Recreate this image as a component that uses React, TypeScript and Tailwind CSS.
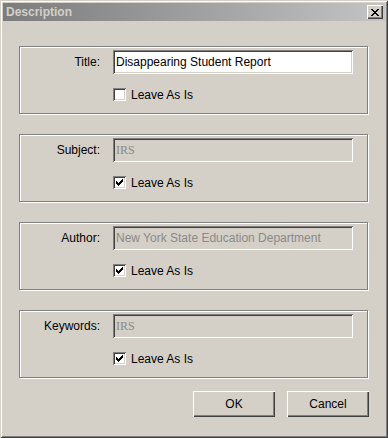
import React from 'react';

const font = { fontFamily: '"Liberation Sans", Arial, sans-serif' };

const CheckMark = () => (
  <svg width="7" height="7" viewBox="0 0 7 7" shapeRendering="crispEdges">
    <rect x="6" y="0" width="1" height="1" fill="#000" />
    <rect x="5" y="1" width="2" height="1" fill="#000" />
    <rect x="0" y="2" width="1" height="1" fill="#000" />
    <rect x="4" y="2" width="3" height="1" fill="#000" />
    <rect x="0" y="3" width="2" height="1" fill="#000" />
    <rect x="3" y="3" width="3" height="1" fill="#000" />
    <rect x="0" y="4" width="5" height="1" fill="#000" />
    <rect x="1" y="5" width="3" height="1" fill="#000" />
    <rect x="2" y="6" width="1" height="1" fill="#000" />
  </svg>
);

const CloseGlyph = () => (
  <svg width="8" height="7" viewBox="0 0 8 7" shapeRendering="crispEdges">
    <rect x="0" y="0" width="2" height="1" fill="#000" />
    <rect x="6" y="0" width="2" height="1" fill="#000" />
    <rect x="1" y="1" width="2" height="1" fill="#000" />
    <rect x="5" y="1" width="2" height="1" fill="#000" />
    <rect x="2" y="2" width="4" height="1" fill="#000" />
    <rect x="3" y="3" width="2" height="1" fill="#000" />
    <rect x="2" y="4" width="4" height="1" fill="#000" />
    <rect x="1" y="5" width="2" height="1" fill="#000" />
    <rect x="5" y="5" width="2" height="1" fill="#000" />
    <rect x="0" y="6" width="2" height="1" fill="#000" />
    <rect x="6" y="6" width="2" height="1" fill="#000" />
  </svg>
);

interface FieldProps {
  label: string;
  value: string;
  editable?: boolean;
  checked?: boolean;
  serif?: boolean;
}

const FieldGroup = ({ label, value, editable, checked, serif }: FieldProps) => (
  <div className="w-[349px] h-[68px] border border-[#808080] shadow-[inset_1px_1px_0_#fff,1px_1px_0_#fff] pt-[3px] flex flex-col">
    <div className="flex items-center h-[24px]">
      <div className="w-[81px] pr-[1px] text-right text-black">{label}</div>
      <div
        className={`ml-[12px] w-[240px] h-[24px] flex items-center pl-[3px] shadow-[inset_1px_1px_0_#808080,inset_-1px_-1px_0_#fff,inset_2px_2px_0_#404040,inset_-2px_-2px_0_#d4d0c8] ${
          editable ? 'bg-white text-black' : 'bg-[#d4d0c8] text-[#8a8a8a]'
        }`}
        style={serif ? { fontFamily: '"Liberation Serif", serif' } : undefined}
      >
        {value}
      </div>
    </div>
    <div className="flex items-center mt-[14px] ml-[93px] h-[13px]">
      <div className="w-[13px] h-[13px] bg-white flex items-center justify-center shadow-[inset_1px_1px_0_#808080,inset_-1px_-1px_0_#fff,inset_2px_2px_0_#404040,inset_-2px_-2px_0_#d4d0c8]">
        {checked && <CheckMark />}
      </div>
      <span className="ml-[5px] text-black">Leave As Is</span>
    </div>
  </div>
);

const Button = ({ children }: { children: React.ReactNode }) => (
  <button className="w-[82px] h-[26px] bg-[#d4d0c8] text-black flex items-center justify-center shadow-[inset_1px_1px_0_#fff,inset_-1px_-1px_0_#404040,inset_-2px_-2px_0_#808080]">
    {children}
  </button>
);

export default function App() {
  return (
    <div
      className="w-[388px] h-[438px] bg-[#d4d0c8] flex flex-col text-[12px] shadow-[inset_1px_1px_0_#d4d0c8,inset_-1px_-1px_0_#404040,inset_2px_2px_0_#fff,inset_-2px_-2px_0_#808080]"
      style={font}
    >
      {/* Title bar */}
      <div className="mt-[3px] mx-[3px] h-[18px] flex items-center justify-between bg-gradient-to-r from-[#7c7c7c] to-[#c4c4c4]">
        <span className="pl-[3px] text-[12px] font-bold text-[#d4d0c8]">Description</span>
        <div className="mr-[2px] w-[16px] h-[14px] bg-[#d4d0c8] flex items-center justify-center shadow-[inset_1px_1px_0_#fff,inset_-1px_-1px_0_#404040,inset_-2px_-2px_0_#808080]">
          <CloseGlyph />
        </div>
      </div>

      <div className="flex flex-col gap-[20px] mt-[25px] ml-[19px]">
        <FieldGroup label="Title:" value="Disappearing Student Report" editable />
        <FieldGroup label="Subject:" value="IRS" checked serif />
        <FieldGroup label="Author:" value="New York State Education Department" checked />
        <FieldGroup label="Keywords:" value="IRS" checked serif />
      </div>

      <div className="flex justify-end gap-[12px] mt-[13px] pr-[19px]">
        <Button>OK</Button>
        <Button>Cancel</Button>
      </div>
    </div>
  );
}
